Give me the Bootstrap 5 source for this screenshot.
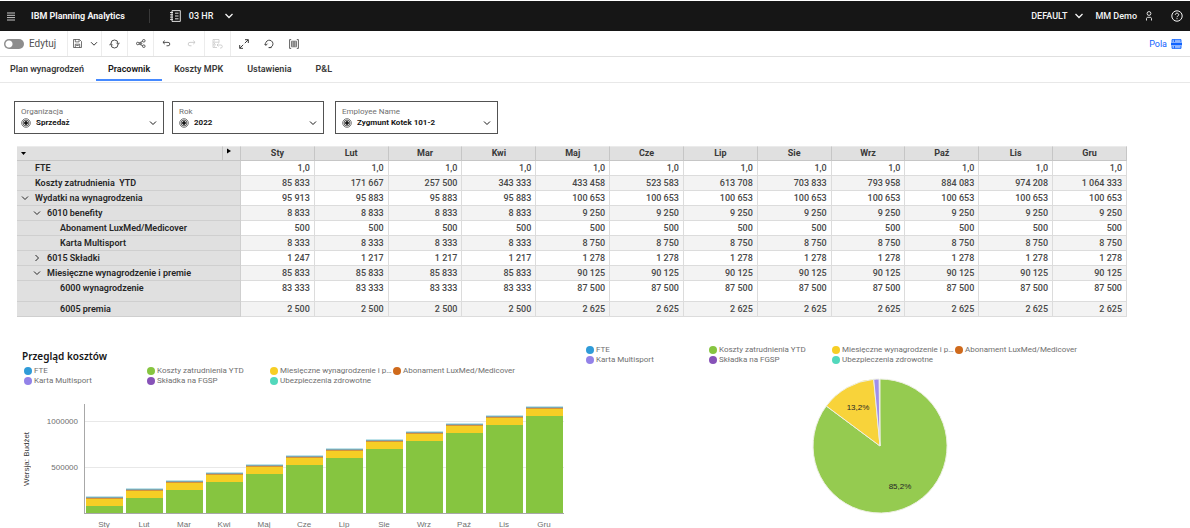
<!DOCTYPE html>
<html lang="pl">
<head>
<meta charset="utf-8">
<meta name="viewport" content="width=device-width, initial-scale=1">
<title>IBM Planning Analytics</title>
<link href="https://cdn.jsdelivr.net/npm/bootstrap@5.3.0/dist/css/bootstrap.min.css" rel="stylesheet">
<style>
  body { font-family: Roboto, "Noto Sans", sans-serif; font-size: 9px; line-height: 12px; color: #161616; background: #fff; }
  svg { display: block; flex: none; fill: none; stroke: currentColor; }
  button { color: inherit; font: inherit; }
  .shell-bar { height: 30px; margin-top: 1px; padding: 0 7px; background: #161616; color: #f4f4f4; font-weight: 500; }
  .shell-bar button, .toolbar button { border: 0; background: none; padding: 0; display: flex; align-items: center; justify-content: center; }
  .shell-split { width: 1px; height: 14px; background: #393939; }
  .user-btn { margin: 0 18px 0 12px; }
  .toolbar { height: 26px; border-bottom: 1px solid #e0e0e0; color: #393939; }
  .tool { width: 25px; height: 25px; }
  .toolbar .start { width: 26px; border-left: 1px solid #ececec; }
  .toolbar .save { width: 20px; }
  .toolbar .save-menu { width: 14px; }
  .tool:disabled { color: #c6c6c6; }
  .edit-group { width: 67px; gap: 5px; font-size: 10px; color: #525252; }
  .edit-group .form-check-input { width: 20px; height: 10px; margin: 0; border: 0; background-color: #8d8d8d;
    background-image: radial-gradient(circle at 5px 5px, #fff 3px, transparent 4px); background-position: 0 0; background-size: 20px 10px; }
  .link-fields { color: #0f62fe; }
  .page-tabs { height: 26px; border-bottom: 1px solid #e8e8e8; }
  .page-tabs .nav-link { padding: 6px 12px 4px; color: #393939; font-weight: 600; border-bottom: 2px solid transparent; height: 24px; border-radius: 0; }
  .page-tabs .nav-link.first { padding-left: 10px; }
  .page-tabs .nav-link.active { color: #161616; border-color: #4589ff; }
  .prompts { padding: 18px 14px 12px; }
  .prompt { height: 33px; border: 1px solid #525252; padding: 4px 6px; }
  .prompt label { display: block; font-size: 8px; line-height: 11px; color: #6f6f6f; }
  .prompt select { appearance: none; border: 0; background: none; padding: 0; margin-left: 5px; color: #161616; font-size: 8px; font-weight: 700; line-height: 12px; outline: 0; }
  .w-org { width: 150px; } .w-year { width: 152px; margin: 0 11px 0 8px; } .w-emp { width: 163px; }
  .grid-wrap { padding: 0 63px 0 17px; }
  .cube { width: 100%; table-layout: fixed; border-collapse: separate; border-spacing: 0; line-height: 14px; }
  .cube th, .cube td { height: 15px; padding: 0 4px; border-bottom: 1px solid #dcdcdc; border-right: 1px solid #dcdcdc; vertical-align: top; white-space: nowrap; }
  .cube thead th { height: 15px; line-height: 12px; background: #e0e0e0; color: #393939; text-align: center; font-weight: 700; border-color: #c6c6c6; border-top: 1px solid #ebebeb; }
  .cube td { text-align: right; font-weight: 500; color: #484848; }
  .cube tbody th { background: #e0e0e0; font-weight: 600; color: #262626; border-color: #cfcfcf; }
  .cube tbody tr:nth-child(even) td { background: #f3f3f3; }
  .cube .tall > * { height: 21px; }
  .cube .name { display: flex; align-items: center; height: 14px; white-space: pre; }
  .cube .name svg, .cube .name::before { width: 8px; margin-right: 6px; }
  .cube .leaf::before { content: ""; }
  .lvl1 { padding-left: 12px; } .lvl2 { padding-left: 25px; }
  .charts { display: grid; grid-template-columns: 562fr 592fr; padding: 28px 14px 0 22px; font-family: "Liberation Sans", Arial, sans-serif; font-size: 8px; line-height: 10px; color: #6f6f6f; }
  .chart-title { font-family: "Noto Sans", sans-serif; font-size: 10px; line-height: 16px; font-weight: 600; color: #161616; margin: 3px 0 2px; }
  .legend { display: grid; grid-template-columns: repeat(4, 123px); padding-left: 2px; margin: 0; list-style: none; white-space: nowrap; font-family: Roboto, sans-serif; }
  .legend li { display: flex; align-items: center; gap: 2px; height: 10px; }
  .legend li::before { content: ""; flex: none; width: 8px; height: 8px; border-radius: 50%; background: var(--k); }
  .plot-row { display: grid; grid-template-columns: 10px 46px 6px 1fr; padding: 18px 20px 0 0; }
  .axis-name { writing-mode: vertical-rl; rotate: 180deg; text-align: center; color: #393939; }
  .ticks { text-align: right; padding-top: 13px; }
  .ticks span { display: block; height: 46px; }
  .plot { grid-column: 4; height: 110px; border-left: 1px solid #a8a8a8; border-bottom: 1px solid #a8a8a8; display: grid; grid-template-columns: repeat(12, 1fr); column-gap: 3px; padding: 0 1px; align-items: end;
    background: linear-gradient(#e8e8e8, #e8e8e8) 0 17px / 100% 1px no-repeat, linear-gradient(#e8e8e8, #e8e8e8) 0 63px / 100% 1px no-repeat; }
  .stack { background: linear-gradient(#bfe3ea 1px, #7fa5b0 1px 2px, #d4933a 2px 3px, #f6ce25 3px 10px, #86c540 10px); }
  .months { grid-column: 4; display: grid; grid-template-columns: repeat(12, 1fr); text-align: center; line-height: 8px; padding-top: 7px; }
</style>
</head>
<body>
<div class="vh-100 overflow-hidden">
  <header class="shell-bar d-flex align-items-center">
    <button type="button" aria-label="Menu"><svg width="8" height="9" viewBox="0 0 8 9"><path d="M0 1h8M0 3.3h8M0 5.6h8M0 8h8" stroke-width=".8"/></svg></button>
    <span class="fw-bold ms-3">IBM Planning Analytics</span>
    <span class="shell-split ms-4 me-3"></span>
    <button type="button" class="ms-1 gap-2"><svg width="11" height="12" viewBox="0 0 11 12"><path d="M2 .6h8.3v10.8H2zM0 2.5h3M0 4.8h3M0 7.1h3M0 9.4h3M5 3.2h3.5M5 6h3.5M5 8.800h3.5" stroke-width=".9"/></svg>03 HR<svg class="ms-1" width="8" height="6" viewBox="0 0 8 6"><path d="M.5 1 4 4.5 7.5 1" stroke-width="1.3"/></svg></button>
    <button type="button" class="ms-auto gap-2">DEFAULT<svg width="8" height="6" viewBox="0 0 8 6"><path d="M.5 1 4 4.5 7.5 1" stroke-width="1.3"/></svg></button>
    <button type="button" class="gap-2 user-btn">MM Demo<svg width="8" height="10" viewBox="0 0 8 10" stroke-width=".9"><circle cx="4" cy="2.500" r="1.900"/><path d="M1.500 9.500V7.800c0-1 .5-1.500 1.500-1.500h2c1 0 1.500.5 1.500 1.500v1.700"/></svg></button>
    <button type="button" aria-label="Pomoc"><svg width="12" height="12" viewBox="0 0 12 12"><circle cx="6" cy="6" r="5.200"/><path d="M4.300 4.800c0-2.200 3.400-2.200 3.400 0C7.700 6 6 5.900 6 7.200M6 8.200v1"/></svg></button>
  </header>

  <div class="toolbar d-flex align-items-center">
    <div class="edit-group form-check form-switch d-flex align-items-center m-0 ps-1">
      <input class="form-check-input" type="checkbox" role="switch" id="edit"><label for="edit">Edytuj</label>
    </div>
    <button type="button" class="tool start save" aria-label="Zapisz"><svg width="9" height="9" viewBox="0 0 9 9" stroke-width=".7"><path d="M.5.5h6L8.500 2.500v6h-8zM2.300.5v2.400h3.800V.5M2.300 8.500V5.200h4.400v3.300M3.200 6.500h2.500"/></svg></button>
    <button type="button" class="tool save-menu" aria-label="Opcje zapisu"><svg width="8" height="6" viewBox="0 0 8 6"><path d="M1 1.200 4 4.200l3-3"/></svg></button>
    <button type="button" class="tool start" aria-label="Odśwież"><svg width="11" height="10" viewBox="0 0 11 10" stroke-width=".9"><path d="M2 4.500a3.500 3.500 0 0 1 7 0v.7M7.300 3.700 9 5.400l1.700-1.700M9 5.500a3.500 3.500 0 0 1-7 0v-.7M.3 6.300 2 4.600l1.700 1.700"/></svg></button>
    <button type="button" class="tool start" aria-label="Udostępnij"><svg width="10" height="9" viewBox="0 0 10 9" stroke-width=".8"><circle cx="1.800" cy="4.500" r="1.300"/><circle cx="7.800" cy="1.800" r="1.300"/><circle cx="7.800" cy="7.200" r="1.300"/><circle cx="5" cy="4.500" r=".8"/><path d="m3 4 3.600-1.700M3 5l3.600 1.700"/></svg></button>
    <button type="button" class="tool start" aria-label="Cofnij"><svg width="9" height="7" viewBox="0 0 10 8"><path d="M3 .7.900 2.700 3 4.700M1 2.700h5.800a1.900 1.900 0 0 1 0 3.900H5"/></svg></button>
    <button type="button" class="tool" aria-label="Ponów" disabled><svg width="9" height="7" viewBox="0 0 10 8"><path d="m7 .7 2.100 2L7 4.700M9 2.700H3.200a1.900 1.900 0 0 0 0 3.900H5"/></svg></button>
    <button type="button" class="tool start" aria-label="Przywróć dane" disabled><svg width="11" height="10" viewBox="0 0 11 10" stroke-width=".8"><path d="M5 8.500H1v-8h6v3.200M1 3.200h6M1 5.800h3M2 1.900h1M2 4.500h1M2 7.200h1M6.500 4.500 5 6l1.500 1.500M5 6h3.800a1.500 1.500 0 0 1 0 3H8"/></svg></button>
    <button type="button" class="tool start" aria-label="Pełny ekran"><svg width="10" height="10" viewBox="0 0 10 10"><path d="M6 .7h3.300V4M9.200.8 5.800 4.200M4 9.300H.7V6M.8 9.200l3.400-3.400"/></svg></button>
    <button type="button" class="tool" aria-label="Resetuj"><svg width="10" height="10" viewBox="0 0 10 10" stroke-width=".9"><path d="M1.800 6.200a3.700 3.700 0 1 1 3.400 2.400M4.500 8.600h3M.2 4.700l1.600 1.700 1.700-1.700"/></svg></button>
    <button type="button" class="tool" aria-label="Dopasuj"><svg width="10" height="10" viewBox="0 0 10 10" stroke-width=".8"><path d="M2.200.6H.6v8.800h1.600M7.800.6h1.600v8.800H7.800"/><path d="M2.500 2.200v5.600h5V2.200zM2.500 4h5M2.500 6h5M4.200 2.200v5.600M5.800 2.200v5.600" stroke-width=".6"/></svg></button>
    <a href="#" class="link-fields ms-auto me-2 d-flex align-items-center gap-1 text-decoration-none">Pola<svg width="11" height="10" viewBox="0 0 11 10" stroke-width=".9"><path d="M1 3V.6h9V3M1 7v2.400h9V7M3.500.6V3M3.500 7v2.400M1 2h9M1 8h9"/><path d="M0 3.500h11v3H0z" fill="currentColor" stroke="none"/></svg></a>
  </div>

  <nav class="page-tabs nav flex-nowrap text-nowrap">
    <a class="nav-link first" href="#">Plan wynagrodzeń</a>
    <a class="nav-link active" aria-current="page" href="#">Pracownik</a>
    <a class="nav-link" href="#">Koszty MPK</a>
    <a class="nav-link" href="#">Ustawienia</a>
    <a class="nav-link" href="#">P&amp;L</a>
  </nav>

  <svg width="0" height="0" class="position-absolute" aria-hidden="true">
    <symbol id="ring" viewBox="0 0 10 10"><circle cx="5" cy="5" r="4.300" stroke-width=".6"/><circle cx="5" cy="5" r="2.900" stroke-width=".7"/><circle cx="5" cy="5" r="1.400" fill="currentColor"/></symbol>
    <symbol id="down" viewBox="0 0 8 8"><path d="m1 2.500 3 3 3-3"/></symbol>
    <symbol id="right" viewBox="0 0 8 8"><path d="m2.500 1 3 3-3 3"/></symbol>
  </svg>

  <main>
    <form class="prompts d-flex">
      <div class="prompt w-org">
        <label for="org">Organizacja</label>
        <div class="d-flex align-items-center"><svg width="10" height="10"><use href="#ring"/></svg><select id="org" class="flex-grow-1"><option>Sprzedaż</option></select><svg width="8" height="8"><use href="#down"/></svg></div>
      </div>
      <div class="prompt w-year">
        <label for="year">Rok</label>
        <div class="d-flex align-items-center"><svg width="10" height="10"><use href="#ring"/></svg><select id="year" class="flex-grow-1"><option>2022</option></select><svg width="8" height="8"><use href="#down"/></svg></div>
      </div>
      <div class="prompt w-emp">
        <label for="emp">Employee Name</label>
        <div class="d-flex align-items-center"><svg width="10" height="10"><use href="#ring"/></svg><select id="emp" class="flex-grow-1"><option>Zygmunt Kotek 101-2</option></select><svg width="8" height="8"><use href="#down"/></svg></div>
      </div>
    </form>

    <div class="grid-wrap">
      <table class="cube">
        <colgroup><col style="width:206px"><col style="width:18px"><col span="12"></colgroup>
        <thead>
          <tr><th aria-label="Pozycje"><svg width="6" height="12" viewBox="0 0 6 12"><path d="M0 5h5L2.500 8z" fill="#000" stroke="none"/></svg></th><th aria-label="Miesiące"><svg width="6" height="12" viewBox="0 0 6 12"><path d="M0 1.500v5L4 4z" fill="#000" stroke="none"/></svg></th><th>Sty</th><th>Lut</th><th>Mar</th><th>Kwi</th><th>Maj</th><th>Cze</th><th>Lip</th><th>Sie</th><th>Wrz</th><th>Paź</th><th>Lis</th><th>Gru</th></tr>
        </thead>
        <tbody>
          <tr><th colspan="2" scope="row"><div class="name leaf">FTE</div></th><td>1,0</td><td>1,0</td><td>1,0</td><td>1,0</td><td>1,0</td><td>1,0</td><td>1,0</td><td>1,0</td><td>1,0</td><td>1,0</td><td>1,0</td><td>1,0</td></tr>
          <tr><th colspan="2" scope="row"><div class="name leaf">Koszty zatrudnienia  YTD</div></th><td>85 833</td><td>171 667</td><td>257 500</td><td>343 333</td><td>433 458</td><td>523 583</td><td>613 708</td><td>703 833</td><td>793 958</td><td>884 083</td><td>974 208</td><td>1 064 333</td></tr>
          <tr><th colspan="2" scope="row"><div class="name"><svg height="8"><use href="#down"/></svg>Wydatki na wynagrodzenia</div></th><td>95 913</td><td>95 883</td><td>95 883</td><td>95 883</td><td>100 653</td><td>100 653</td><td>100 653</td><td>100 653</td><td>100 653</td><td>100 653</td><td>100 653</td><td>100 653</td></tr>
          <tr><th colspan="2" scope="row"><div class="name lvl1"><svg height="8"><use href="#down"/></svg>6010 benefity</div></th><td>8 833</td><td>8 833</td><td>8 833</td><td>8 833</td><td>9 250</td><td>9 250</td><td>9 250</td><td>9 250</td><td>9 250</td><td>9 250</td><td>9 250</td><td>9 250</td></tr>
          <tr><th colspan="2" scope="row"><div class="name leaf lvl2">Abonament LuxMed/Medicover</div></th><td>500</td><td>500</td><td>500</td><td>500</td><td>500</td><td>500</td><td>500</td><td>500</td><td>500</td><td>500</td><td>500</td><td>500</td></tr>
          <tr><th colspan="2" scope="row"><div class="name leaf lvl2">Karta Multisport</div></th><td>8 333</td><td>8 333</td><td>8 333</td><td>8 333</td><td>8 750</td><td>8 750</td><td>8 750</td><td>8 750</td><td>8 750</td><td>8 750</td><td>8 750</td><td>8 750</td></tr>
          <tr><th colspan="2" scope="row"><div class="name lvl1"><svg height="8"><use href="#right"/></svg>6015 Składki</div></th><td>1 247</td><td>1 217</td><td>1 217</td><td>1 217</td><td>1 278</td><td>1 278</td><td>1 278</td><td>1 278</td><td>1 278</td><td>1 278</td><td>1 278</td><td>1 278</td></tr>
          <tr><th colspan="2" scope="row"><div class="name lvl1"><svg height="8"><use href="#down"/></svg>Miesięczne wynagrodzenie i premie</div></th><td>85 833</td><td>85 833</td><td>85 833</td><td>85 833</td><td>90 125</td><td>90 125</td><td>90 125</td><td>90 125</td><td>90 125</td><td>90 125</td><td>90 125</td><td>90 125</td></tr>
          <tr class="tall"><th colspan="2" scope="row"><div class="name leaf lvl2">6000 wynagrodzenie</div></th><td>83 333</td><td>83 333</td><td>83 333</td><td>83 333</td><td>87 500</td><td>87 500</td><td>87 500</td><td>87 500</td><td>87 500</td><td>87 500</td><td>87 500</td><td>87 500</td></tr>
          <tr><th colspan="2" scope="row"><div class="name leaf lvl2">6005 premia</div></th><td>2 500</td><td>2 500</td><td>2 500</td><td>2 500</td><td>2 625</td><td>2 625</td><td>2 625</td><td>2 625</td><td>2 625</td><td>2 625</td><td>2 625</td><td>2 625</td></tr>
        </tbody>
      </table>
    </div>

    <div class="charts">
      <section>
        <h2 class="chart-title">Przegląd kosztów</h2>
        <ul class="legend">
          <li style="--k:#2f9bd8">FTE</li><li style="--k:#86c540">Koszty zatrudnienia YTD</li><li style="--k:#f6ce25">Miesięczne wynagrodzenie i p…</li><li style="--k:#cf6a1c">Abonament LuxMed/Medicover</li>
          <li style="--k:#9382e8">Karta Multisport</li><li style="--k:#8752b8">Składka na FGSP</li><li style="--k:#52d8bc">Ubezpieczenia zdrowotne</li>
        </ul>
        <div class="plot-row">
          <div class="axis-name">Wersja: Budżet</div>
          <div class="ticks"><span>1000000</span><span>500000</span></div>
          <div class="plot">
            <div class="stack" style="height:16%"></div><div class="stack" style="height:23%"></div><div class="stack" style="height:30%"></div><div class="stack" style="height:38%"></div><div class="stack" style="height:45%"></div><div class="stack" style="height:53%"></div><div class="stack" style="height:60%"></div><div class="stack" style="height:68%"></div><div class="stack" style="height:75%"></div><div class="stack" style="height:83%"></div><div class="stack" style="height:90%"></div><div class="stack" style="height:98%"></div>
          </div>
          <div class="months"><span>Sty</span><span>Lut</span><span>Mar</span><span>Kwi</span><span>Maj</span><span>Cze</span><span>Lip</span><span>Sie</span><span>Wrz</span><span>Paź</span><span>Lis</span><span>Gru</span></div>
        </div>
      </section>
      <section>
        <ul class="legend">
          <li style="--k:#2f9bd8">FTE</li><li style="--k:#86c540">Koszty zatrudnienia YTD</li><li style="--k:#f6ce25">Miesięczne wynagrodzenie i p…</li><li style="--k:#cf6a1c">Abonament LuxMed/Medicover</li>
          <li style="--k:#9382e8">Karta Multisport</li><li style="--k:#8752b8">Składka na FGSP</li><li style="--k:#52d8bc">Ubezpieczenia zdrowotne</li>
        </ul>
        <svg class="mx-auto mt-2 pt-1" width="136" height="142" viewBox="-68 -68 136 136" role="img" aria-label="Udział kosztów">
          <g stroke="#eef0e4" stroke-width="1">
            <path d="M0 0V-67A67 67 0 1 1-53.700-40z" fill="#95cb50"/>
            <path d="M0 0-53.700-40A67 67 0 0 1-6.300-66.700z" fill="#f8d33a"/>
            <path d="M0 0-6.300-66.700A67 67 0 0 1-.9-67z" fill="#9f8fec"/>
          </g>
          <g fill="#262626" stroke="none" text-anchor="middle" font-size="8"><text x="-22" y="-36">13,2%</text><text x="20" y="43">85,2%</text></g>
        </svg>
      </section>
    </div>
  </main>
</div>
<script src="https://cdn.jsdelivr.net/npm/bootstrap@5.3.0/dist/js/bootstrap.bundle.min.js"></script>
</body>
</html>
